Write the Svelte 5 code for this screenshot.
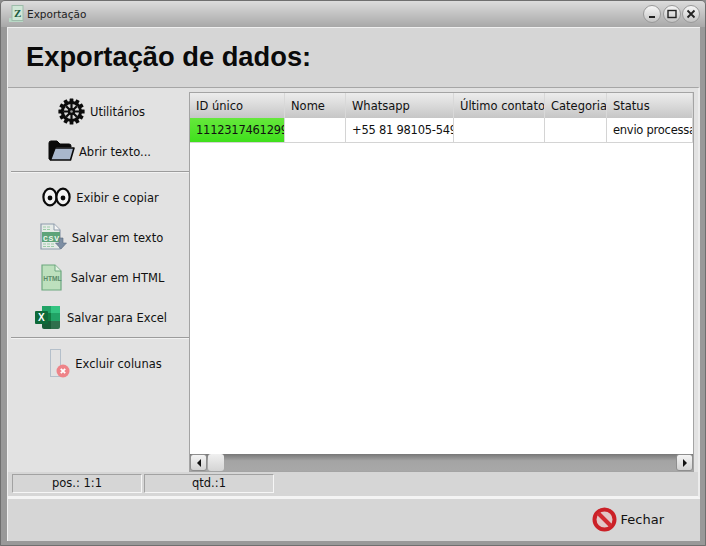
<script>
  const topTools = [
    { label: 'Utilitários', icon: 'gear', gap: 5, pad: 6 },
    { label: 'Abrir texto...', icon: 'folder', gap: 3, pad: 2 }
  ]
  const saveTools = [
    { label: 'Exibir e copiar', icon: 'eyes', gap: 5, pad: 4 },
    { label: 'Salvar em texto', icon: 'csv', gap: 5, pad: 6 },
    { label: 'Salvar em HTML', icon: 'html', gap: 9, pad: 8 },
    { label: 'Salvar para Excel', icon: 'excel', gap: 6, pad: 4 }
  ]
  const columns = [
    { name: 'ID único', width: 95, value: '111231746129965', green: true },
    { name: 'Nome', width: 61, value: '' },
    { name: 'Whatsapp', width: 108, value: '+55 81 98105-5490' },
    { name: 'Último contato', width: 91, value: '' },
    { name: 'Categoria', width: 62, value: '' },
    { name: 'Status', width: 86, value: 'envio processado' }
  ]
</script>

{#snippet icon(name)}
  {#if name === 'gear'}
    <svg width="27" height="27" viewBox="0 0 27 27">
      <g fill="#0c0c0c">
        {#each [0, 30, 60, 90, 120, 150] as a}
          <rect x="11.6" y="0.4" width="3.8" height="26.2" rx="0.5" transform="rotate({a} 13.5 13.5)" />
        {/each}
      </g>
      <circle cx="13.5" cy="13.5" r="10.6" fill="#0c0c0c" />
      <circle cx="13.5" cy="13.5" r="7.6" fill="#d8d8d8" />
      <path d="M13.5 6V21M6 13.5H21M8.2 8.2L18.8 18.8M18.8 8.2L8.2 18.8" stroke="#0c0c0c" stroke-width="2.2" />
      <circle cx="13.5" cy="13.5" r="3.6" fill="#0c0c0c" />
      <circle cx="13.5" cy="13.5" r="1.3" fill="#9a9a9a" />
    </svg>
  {:else if name === 'folder'}
    <svg width="28" height="22" viewBox="0 0 28 22">
      <path d="M1 19V3Q1 1 3 1H9L12 4H21Q23 4 23 6V7H8L3 20Z" fill="#0a0a0a" stroke="#0a0a0a" />
      <path d="M7 8H26L22.5 20H2.5Z" fill="#a9b7cc" stroke="#0a0a0a" stroke-width="1.6" stroke-linejoin="round" />
    </svg>
  {:else if name === 'eyes'}
    <svg width="29" height="20" viewBox="0 0 29 20">
      <ellipse cx="8" cy="10" rx="6.6" ry="8.4" fill="#f4f4f4" stroke="#0a0a0a" stroke-width="2.2" />
      <ellipse cx="21" cy="10" rx="6.6" ry="8.4" fill="#f4f4f4" stroke="#0a0a0a" stroke-width="2.2" />
      <circle cx="8" cy="11" r="2.4" fill="#0a0a0a" />
      <circle cx="21" cy="11" r="2.4" fill="#0a0a0a" />
    </svg>
  {:else if name === 'csv'}
    <svg width="27" height="28" viewBox="0 0 27 28">
      <path d="M1 1H14L20 7V26H1Z" fill="#e6ebe8" stroke="#8d9bab" stroke-width="1.2" />
      <path d="M14 1V7H20" fill="#f5f5f5" stroke="#8d9bab" />
      <path d="M3 4H11M3 6.5H11M3 21H15M3 23.5H15" stroke="#9ccca8" stroke-width="1" stroke-dasharray="3 1" />
      <rect x="2" y="9" width="18" height="10" fill="#5ea37a" />
      <text x="3" y="17.5" class="csv">CSV</text>
      <path d="M19 15H23V20H26.5L21 26L15.5 20H19Z" fill="#7d8ea3" stroke="#5d6c80" stroke-width="0.6" />
    </svg>
  {:else if name === 'html'}
    <svg width="21" height="27" viewBox="0 0 21 27">
      <path d="M1 1H14L20 7V26H1Z" fill="#bde0bd" stroke="#6da77f" stroke-width="1.2" />
      <path d="M14 1V7H20" fill="#e4f2e4" stroke="#6da77f" />
      <text x="2.2" y="17" class="html">HTML</text>
    </svg>
  {:else if name === 'excel'}
    <svg width="27" height="25" viewBox="0 0 27 25">
      <path d="M8 1H24Q26 1 26 3V8H8Z" fill="#21a366" />
      <rect x="17" y="1" width="9" height="8" fill="#33c481" />
      <rect x="8" y="8" width="9" height="8" fill="#107c41" />
      <rect x="17" y="8" width="9" height="8" fill="#21a366" />
      <path d="M8 16H17V24H10Q8 24 8 22Z" fill="#185c37" />
      <path d="M17 16H26V22Q26 24 24 24H17Z" fill="#2f6f4c" />
      <rect x="1" y="6" width="13" height="13" rx="1" fill="#0e6a39" />
      <text x="4" y="16.4" class="xl">X</text>
    </svg>
  {:else if name === 'cols'}
    <svg width="22" height="30" viewBox="0 0 22 30">
      <rect x="1.5" y="1.5" width="10" height="27" fill="none" stroke="#b4bfca" />
      <circle cx="14" cy="23" r="6.5" fill="#ee8388" />
      <path d="M11.8 20.8L16.2 25.2M16.2 20.8L11.8 25.2" stroke="#fff" stroke-width="1.8" />
    </svg>
  {:else if name === 'stop'}
    <svg width="25" height="25" viewBox="0 0 25 25">
      <circle cx="12.5" cy="12.5" r="10" fill="#e2c6c6" stroke="#cb2027" stroke-width="4" />
      <path d="M6 6L19 19" stroke="#d22a30" stroke-width="4" />
    </svg>
  {/if}
{/snippet}

{#snippet tool(t)}
  <div class="tool" style="gap: {t.gap}px; padding-left: {t.pad}px">
    {@render icon(t.icon)}
    <span>{t.label}</span>
  </div>
{/snippet}

<div class="window">
  <div class="titlebar">
    <svg class="app-icon" width="16" height="18" viewBox="0 0 16 18">
      <rect x="0" y="13" width="14" height="4" fill="#b9d8c6" />
      <rect x="3" y="0.5" width="11" height="15" fill="#cfe6d6" stroke="#9dbcaa" />
      <text x="5" y="12" class="app-z">Z</text>
    </svg>
    <span class="title">Exportação</span>
    <div class="win-buttons">
      <div class="win-btn">
        <svg width="10" height="10" viewBox="0 0 10 10"><path d="M2 8H8" stroke="#222" stroke-width="2" /></svg>
      </div>
      <div class="win-btn">
        <svg width="10" height="10" viewBox="0 0 10 10"><rect x="1" y="1.5" width="8" height="7" fill="none" stroke="#222" stroke-width="1.4" /></svg>
      </div>
      <div class="win-btn">
        <svg width="10" height="10" viewBox="0 0 10 10"><path d="M1.5 1.5L8.5 8.5M8.5 1.5L1.5 8.5" stroke="#222" stroke-width="1.8" /></svg>
      </div>
    </div>
  </div>

  <div class="client">
    <header class="heading">Exportação de dados:</header>

    <div class="panel">
      <div class="body">
        <aside class="sidebar">
          <div class="group first">
            {#each topTools as t}
              {@render tool(t)}
            {/each}
          </div>
          <div class="sep"></div>
          <div class="group second">
            {#each saveTools as t}
              {@render tool(t)}
            {/each}
          </div>
          <div class="sep"></div>
          <div class="group second">
            {@render tool({ label: 'Excluir colunas', icon: 'cols', gap: 4, pad: 14 })}
          </div>
        </aside>

        <div class="table-box">
          <div class="table-head">
            {#each columns as c}
              <div class="th" style="width: {c.width}px">{c.name}</div>
            {/each}
          </div>
          <div class="table-row">
            {#each columns as c}
              <div class="td" class:green={c.green} style="width: {c.width}px">{c.value}</div>
            {/each}
          </div>
          <div class="table-empty"></div>
          <div class="scrollbar">
            <div class="sb-btn"><span class="arrow left"></span></div>
            <div class="sb-thumb"></div>
            <div class="sb-track"></div>
            <div class="sb-btn"><span class="arrow right"></span></div>
          </div>
        </div>
      </div>

      <div class="statusbar">
        <div class="stat">pos.: 1:1</div>
        <div class="stat">qtd.:1</div>
      </div>
    </div>

    <footer class="footer">
      <div class="close">
        {@render icon('stop')}
        <span>Fechar</span>
      </div>
    </footer>
  </div>
</div>

<style>
  :global(body) {
    margin: 0;
    background: #8c8c8c;
  }

  .window {
    width: 706px;
    height: 546px;
    box-sizing: border-box;
    display: flex;
    flex-direction: column;
    background: #999;
    border: 1px solid #6f6f6f;
    border-radius: 5px 5px 0 0;
    font-family: "DejaVu Sans", sans-serif;
    font-size: 11.5px;
    color: #111;
    overflow: hidden;
  }

  .titlebar {
    height: 26px;
    flex: none;
    display: flex;
    align-items: center;
    padding: 0 5px 0 8px;
    background: linear-gradient(#dcdcdc, #a8a8a8);
  }

  .app-icon {
    margin-right: 2px;
  }

  .app-z {
    font: bold 11px "Liberation Serif", serif;
    fill: #1c5a3c;
  }

  .title {
    font-size: 10.5px;
    color: #222;
  }

  .win-buttons {
    margin-left: auto;
    display: flex;
    gap: 1.5px;
  }

  .win-btn {
    width: 18px;
    height: 18px;
    border-radius: 50%;
    display: flex;
    align-items: center;
    justify-content: center;
    background: linear-gradient(#f7f7f7, #c4c4c4);
    border: 1px solid #999;
    box-sizing: border-box;
  }

  .client {
    flex: none;
    width: 692px;
    margin-left: 6px;
    height: 513px;
    display: flex;
    flex-direction: column;
    background: #d6d6d6;
    border-top: 1px solid #f0f0f0;
    border-left: 1px solid #f0f0f0;
  }

  .heading {
    height: 59px;
    flex: none;
    box-sizing: border-box;
    padding: 14px 0 0 18px;
    font: bold 27.3px/30px "Liberation Sans", sans-serif;
    color: #0a0a0a;
  }

  .panel {
    height: 411px;
    flex: none;
    box-sizing: border-box;
    display: flex;
    flex-direction: column;
    background: #e2e2e2;
    border-top: 1px solid #a6a6a6;
    border-bottom: 2px solid #f4f4f4;
    border-right: 2px solid #ececec;
  }

  .body {
    flex: 1;
    display: flex;
    min-height: 0;
  }

  .sidebar {
    width: 181px;
    flex: none;
  }

  .group {
    display: flex;
    flex-direction: column;
  }

  .group.first {
    padding-top: 3px;
  }

  .group.second {
    padding-top: 4px;
  }

  .tool {
    height: 40px;
    display: flex;
    align-items: center;
    justify-content: center;
  }

  .tool span {
    margin-top: 2px;
  }

  .sep {
    margin: 0 0 0 3px;
    height: 1px;
    background: #9c9c9c;
    border-bottom: 1px solid #f2f2f2;
  }

  .table-box {
    width: 505px;
    height: 380px;
    margin-top: 4px;
    box-sizing: border-box;
    display: flex;
    flex-direction: column;
    background: #fff;
    border: 1px solid #a4a4a4;
    overflow: hidden;
  }

  .table-head,
  .table-row {
    display: flex;
    flex: none;
  }

  .table-head {
    height: 25px;
    background: linear-gradient(#ededed, #c6c6c6);
  }

  .th,
  .td {
    flex: none;
    box-sizing: border-box;
    padding-left: 6px;
    white-space: nowrap;
    overflow: hidden;
    line-height: 24px;
  }

  .th {
    line-height: 26px;
    border-right: 1px solid #d8d8d8;
  }

  .td {
    height: 25px;
    letter-spacing: -0.25px;
    border-right: 1px solid #d4d4d4;
    border-bottom: 1px solid #d4d4d4;
  }

  .td.green {
    background: linear-gradient(#66e83c, #3fe01c);
  }

  .table-empty {
    flex: 1;
  }

  .scrollbar {
    height: 17px;
    flex: none;
    display: flex;
    background: linear-gradient(#777, #a4a4a4 40%, #a8a8a8);
  }

  .sb-btn {
    width: 17px;
    height: 17px;
    flex: none;
    box-sizing: border-box;
    display: flex;
    align-items: center;
    justify-content: center;
    background: linear-gradient(#f4f4f4, #d2d2d2);
    border: 1px solid #8e8e8e;
    border-radius: 3px;
  }

  .sb-thumb {
    width: 16px;
    flex: none;
    margin-left: 1px;
    background: linear-gradient(#f0f0f0, #d4d4d4);
    border-radius: 3px;
  }

  .sb-track {
    flex: 1;
  }

  .arrow {
    width: 0;
    height: 0;
    border-top: 4px solid transparent;
    border-bottom: 4px solid transparent;
  }

  .arrow.left {
    border-right: 4px solid #111;
  }

  .arrow.right {
    border-left: 4px solid #111;
  }

  .statusbar {
    height: 24px;
    flex: none;
    box-sizing: border-box;
    display: flex;
    gap: 2px;
    padding: 2px 0 0 4px;
    background: #d6d6d6;
  }

  .stat {
    width: 130px;
    height: 19px;
    box-sizing: border-box;
    text-align: center;
    line-height: 17px;
    border: 1px solid #a2a2a2;
    border-right-color: #f6f6f6;
    border-bottom-color: #f6f6f6;
  }

  .footer {
    height: 42px;
    flex: none;
    display: flex;
    align-items: center;
    justify-content: flex-end;
    padding-right: 36px;
    border-top: 1px solid #f4f4f4;
    box-sizing: border-box;
  }

  .close {
    display: flex;
    align-items: center;
    gap: 4px;
    font-size: 13px;
  }

  .csv {
    font: bold 8px "Liberation Mono", monospace;
    fill: #eef6ee;
    letter-spacing: 0.8px;
  }

  .html {
    font: bold 6.6px "Liberation Sans", sans-serif;
    fill: #5a8a68;
  }

  .xl {
    font: bold 10px "Liberation Sans", sans-serif;
    fill: #fff;
  }
</style>
